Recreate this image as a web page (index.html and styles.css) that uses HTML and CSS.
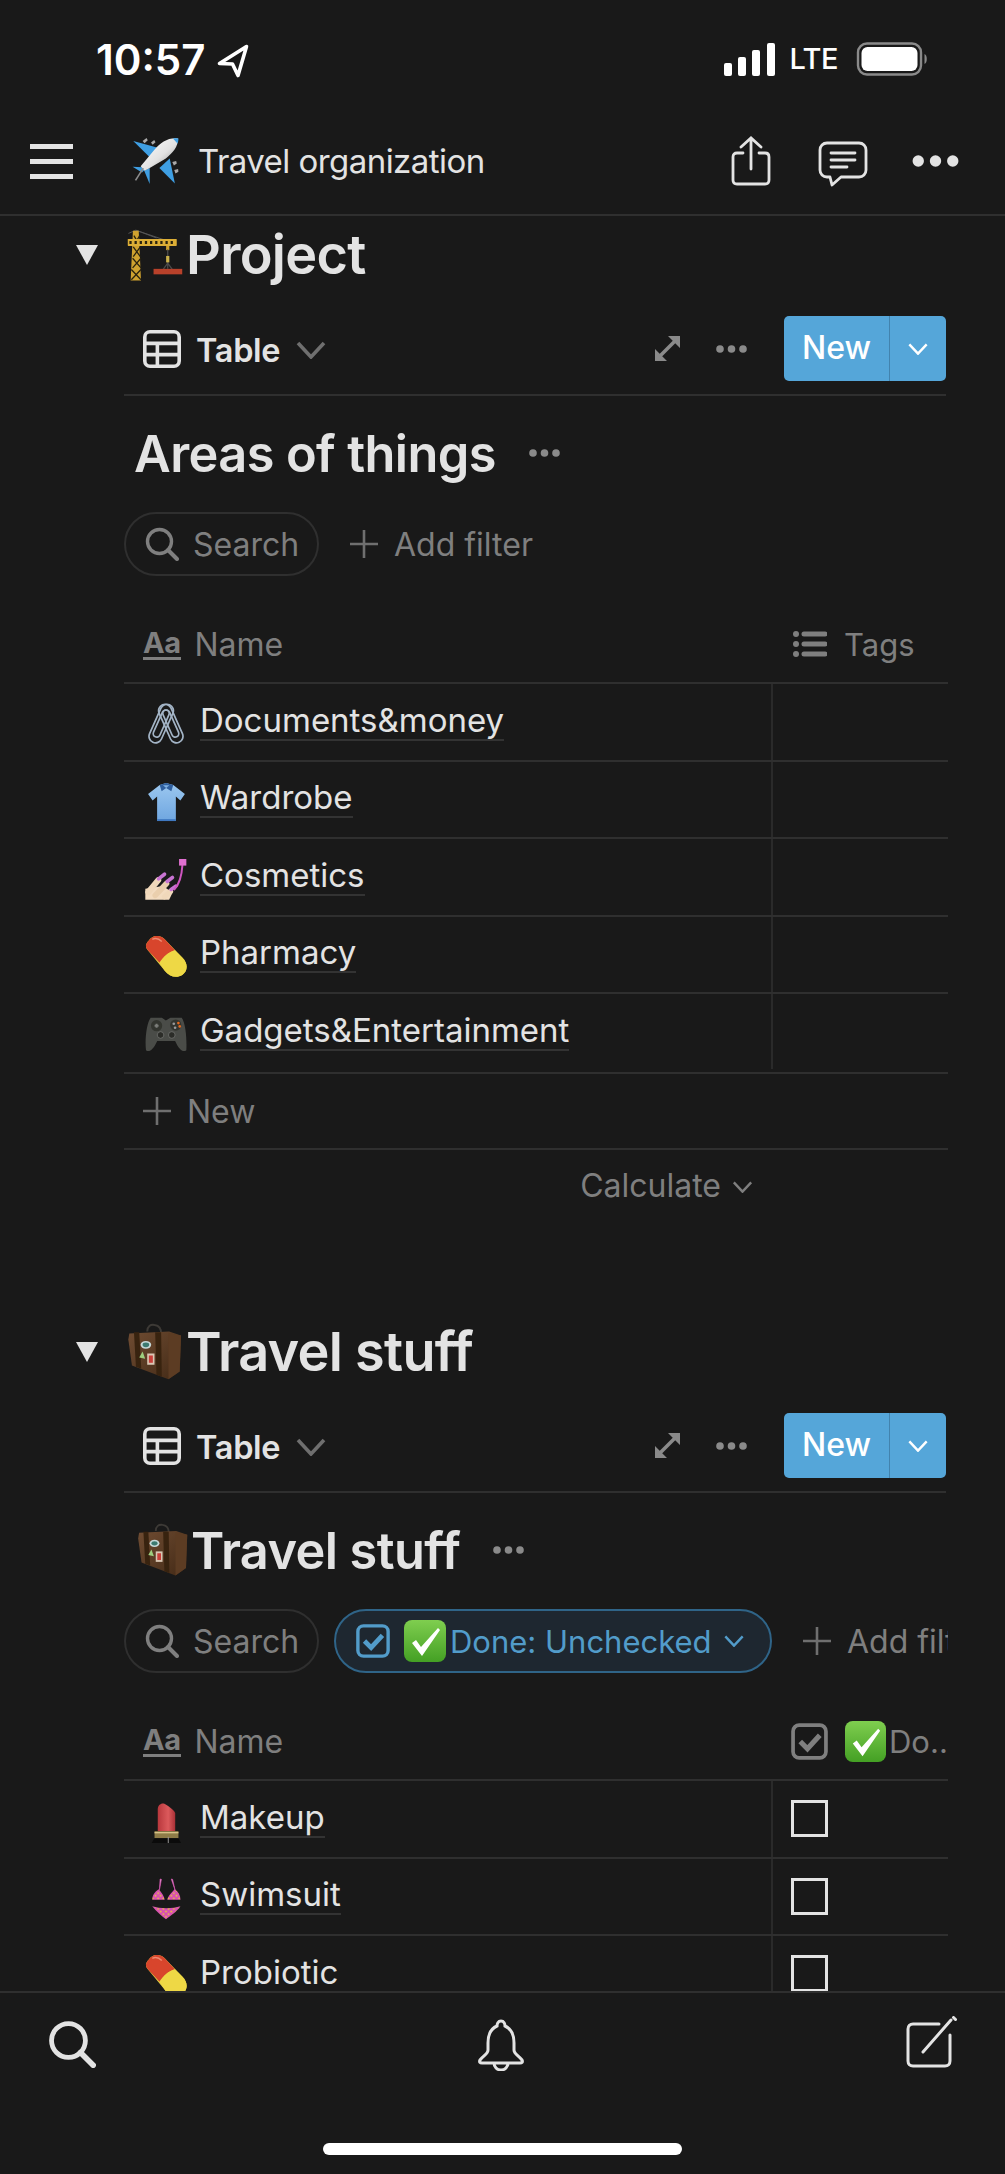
FILE: index.html
```html
<!DOCTYPE html>
<html lang="en">
<head>
<meta charset="utf-8">
<title>Travel organization</title>
<link rel="stylesheet" href="styles.css">
</head>
<body>
<svg class="defs" aria-hidden="true">
  <defs>
    <linearGradient id="gBody" x1="0" y1="0" x2="1" y2="1"><stop offset="0" stop-color="#ffffff"/><stop offset=".55" stop-color="#e2e2e2"/><stop offset="1" stop-color="#858585"/></linearGradient>
    <linearGradient id="gGreen" x1="0" y1="0" x2="0" y2="1"><stop offset="0" stop-color="#7fce4f"/><stop offset="1" stop-color="#44a024"/></linearGradient>
    <linearGradient id="gCase" x1="0" y1="0" x2="1" y2="1"><stop offset="0" stop-color="#6f4c32"/><stop offset="1" stop-color="#432a16"/></linearGradient>
    <linearGradient id="gShirt" x1="0" y1="0" x2="0" y2="1"><stop offset="0" stop-color="#9cc8f0"/><stop offset="1" stop-color="#6fa6e0"/></linearGradient>
    <linearGradient id="gRed" x1="0" y1="0" x2="1" y2="0"><stop offset="0" stop-color="#b8373c"/><stop offset=".6" stop-color="#dc5a5c"/><stop offset="1" stop-color="#a93036"/></linearGradient>
    <pattern id="pDots" width="16" height="16" patternUnits="userSpaceOnUse"><rect width="16" height="16" fill="#d94fb4"/><circle cx="4" cy="4" r="3" fill="#e8c23c"/><circle cx="12" cy="12" r="3" fill="#e8c23c"/></pattern>
    <symbol id="i-plane" viewBox="30 20 155 160">
      <path d="M37 38 116 60 92 92Z" fill="#3f9fe3"/><path d="M166 170 150 92 118 122Z" fill="#3f9fe3"/>
      <path d="M35 118 80 120 64 136Z" fill="#3f9fe3"/><path d="M88 171 71 130 88 122Z" fill="#3f9fe3"/>
      <path d="M66 38 78 29 82 36 72 45ZM92 43 102 35 106 42 97 50ZM158 103 170 100 172 108 163 114ZM164 128 176 125 177 133 168 139Z" fill="#a9a9a9"/>
      <path d="M176 30C146 26 122 42 102 66L60 116 72 130 84 124 138 92C160 74 176 56 176 30Z" fill="url(#gBody)"/>
      <path d="M160 30C166 29 172 29 177 30 177 36 176 42 174 46Z" fill="#3f9fe3"/>
      <path d="M68 122 44 160" stroke="#8c8c8c" stroke-width="5" fill="none"/>
    </symbol>
    <symbol id="i-crane" viewBox="195 45 185 180">
      <path d="M205 68 228 58 292 82M228 58 322 90" stroke="#555" stroke-width="3" fill="none"/>
      <path d="M219 60H237L244 214H212Z" fill="#cfa22f"/>
      <path d="M222 75 240 105M240 75 222 105M220 110 242 140M242 110 220 140M218 145 244 175M244 145 218 175M214 180 244 212M244 180 214 212" stroke="#2a230f" stroke-width="4"/>
      <rect x="203" y="85" width="152" height="22" rx="2" fill="#dcae36"/>
      <path d="M208 96H352" stroke="#2a230f" stroke-width="9" stroke-dasharray="7 9" fill="none"/>
      <path d="M322 107H332V120H322Z" fill="#cfa22f"/>
      <path d="M327 118V178M304 192 327 160 350 192" stroke="#4b4b4b" stroke-width="4" fill="none"/>
      <rect x="322" y="138" width="10" height="20" fill="#c9b04a"/>
      <rect x="283" y="178" width="89" height="17" fill="#b8412a"/>
    </symbol>
    <symbol id="i-case" viewBox="20 20 175 175">
      <path d="M84 46C84 30 94 24 106 26 120 28 127 38 126 54" fill="none" stroke="#3d3a36" stroke-width="6"/>
      <path d="M30 52 150 46 186 58 182 166 148 190 38 148 27 70Z" fill="url(#gCase)"/>
      <path d="M148 50 186 58 182 166 148 190Z" fill="#5c3c23"/>
      <path d="M44 48H60L66 158 50 152ZM108 48H126L128 182 112 176Z" fill="#38230f"/>
      <ellipse cx="80" cy="86" rx="16" ry="12" fill="#c6d8d8"/><ellipse cx="80" cy="86" rx="10" ry="7" fill="#3c7a70"/>
      <path d="M60 124 70 106 78 128Z" fill="#9fcf7f"/>
      <rect x="84" y="112" width="22" height="34" fill="#d9c7b4"/><rect x="89" y="118" width="12" height="22" fill="#c9403a"/>
    </symbol>
    <symbol id="i-clips" viewBox="0 0 42 42">
      <g fill="none" stroke="#a3b4c6" stroke-width="1.700">
        <g transform="rotate(24 16 21)"><rect x="9.500" y="0" width="13" height="41" rx="6.500"/><rect x="12.500" y="6" width="7" height="29" rx="3.500"/></g>
        <g transform="rotate(-24 26 21)"><rect x="19.500" y="0" width="13" height="41" rx="6.500"/><rect x="22.500" y="6" width="7" height="29" rx="3.500"/></g>
      </g>
    </symbol>
    <symbol id="i-shirt" viewBox="45 300 125 130">
      <path d="M88 312 108 306 130 312 166 340 152 360 138 348 138 424H80L80 348 66 360 52 340Z" fill="url(#gShirt)"/>
      <path d="M88 312 108 306 130 312 124 332 108 322 94 332Z" fill="#2f5f9f"/><path d="M98 313H118L108 322Z" fill="#7fb0e2"/>
      <path d="M80 424H138V418H80Z" fill="#3f78c0"/>
    </symbol>
    <symbol id="i-nail" viewBox="45 535 127 127">
      <path d="M46 628 46 661H118L128 640 100 620Z" fill="#f3dcc0"/>
      <g fill="none" stroke-linecap="round">
        <path d="M55 638 85 602" stroke="#f0d8ba" stroke-width="18"/>
        <path d="M76 648 110 612" stroke="#eacfad" stroke-width="17"/>
        <path d="M104 652 122 636" stroke="#f0d8ba" stroke-width="16"/>
        <path d="M86 598 104 584" stroke="#c873d2" stroke-width="11"/>
        <path d="M112 606 128 594" stroke="#c873d2" stroke-width="11"/>
        <path d="M124 630 138 620" stroke="#c873d2" stroke-width="11"/>
        <path d="M158 558C156 590 150 612 134 630" stroke="#cf55c0" stroke-width="6"/>
      </g>
      <rect x="148" y="538" width="22" height="20" fill="#e06fd0"/>
    </symbol>
    <symbol id="i-pill" viewBox="50 775 115 115">
      <path d="M60 788C72 770 92 772 104 784L152 834C170 852 166 872 152 882 136 892 116 886 104 870L56 812C50 804 52 796 60 788Z" fill="#e0d040"/>
      <path d="M60 788C72 770 92 772 104 784L132 814C116 818 100 832 90 848L56 812C50 804 52 796 60 788Z" fill="#d8452c"/>
      <path d="M132 814C116 818 100 832 90 848L104 870C116 886 136 892 152 882 166 872 170 852 152 834Z" fill="#eed845"/>
      <path d="M70 784C78 780 88 782 96 790" stroke="#ef8a70" stroke-width="4" fill="none"/>
    </symbol>
    <symbol id="i-pad" viewBox="45 1018 127 110">
      <path d="M62 1024H96L108 1032 122 1024H156C168 1040 172 1090 170 1122 160 1130 148 1120 136 1094H82C70 1120 58 1130 48 1122 44 1090 50 1040 62 1024Z" fill="#4a4c48"/>
      <circle cx="80" cy="1048" r="17" fill="#33352f"/><path d="M74 1048H86M80 1042V1054" stroke="#7b7d79" stroke-width="6"/>
      <circle cx="138" cy="1046" r="17" fill="#33352f"/><circle cx="132" cy="1042" r="4" fill="#9a9a9a"/><circle cx="146" cy="1040" r="4" fill="#e4681f"/><circle cx="150" cy="1050" r="4" fill="#e4681f"/><circle cx="136" cy="1054" r="4" fill="#9a9a9a"/>
      <circle cx="92" cy="1076" r="10" fill="#2b2c28" stroke="#7b7d79" stroke-width="2"/><circle cx="126" cy="1076" r="10" fill="#2b2c28" stroke="#7b7d79" stroke-width="2"/>
    </symbol>
    <symbol id="i-lip" viewBox="60 30 95 130">
      <path d="M82 120V52C82 42 90 34 100 35 104 36 130 52 136 64V120Z" fill="url(#gRed)"/>
      <path d="M72 120H146V142H72Z" fill="#8e7c48"/><path d="M72 125H146" stroke="#d9c68c" stroke-width="4"/>
      <path d="M72 142H146L154 157H63Z" fill="#0b0b0b"/><rect x="113" y="138" width="3" height="19" fill="#999"/>
    </symbol>
    <symbol id="i-bikini" viewBox="62 262 92 128">
      <path d="M90 265 94 266 88 298ZM124 265 128 266 136 300Z" fill="#d9a9c9" stroke="#d94fb4" stroke-width="2"/>
      <path d="M86 296C94 306 102 316 104 328H66C66 314 74 304 86 296Z" fill="url(#pDots)"/>
      <path d="M134 296C126 306 114 316 112 328H152C152 314 146 304 134 296Z" fill="url(#pDots)"/>
      <path d="M66 348C90 356 128 356 152 348 140 366 120 378 108 388 96 378 78 364 66 348Z" fill="url(#pDots)"/>
    </symbol>
    <symbol id="i-check" viewBox="0 0 42 42">
      <rect width="42" height="42" rx="8" fill="url(#gGreen)"/>
      <path d="M8 23 12 20 17 27 34 8 36 10 18 36Z" fill="#fff"/>
    </symbol>
    <symbol id="i-table" viewBox="0 0 37 37">
      <rect x="1.750" y="1.750" width="33.500" height="33.500" rx="5" fill="none" stroke="currentColor" stroke-width="3.500"/>
      <path d="M2 13H35M2 24H35M14 13V35" fill="none" stroke="currentColor" stroke-width="3.500"/>
    </symbol>
    <symbol id="i-chev" viewBox="0 0 30 18"><path d="M2 2 15 16 28 2" fill="none" stroke="currentColor" stroke-width="3.600"/></symbol>
    <symbol id="i-expand" viewBox="0 0 25 25"><path d="M13 0H25V12ZM0 13V25H12Z" fill="currentColor"/><path d="M5 20 20 5" stroke="currentColor" stroke-width="3.600"/></symbol>
    <symbol id="i-dots" viewBox="0 0 31 8"><circle cx="4" cy="4" r="3.800" fill="currentColor"/><circle cx="15.500" cy="4" r="3.800" fill="currentColor"/><circle cx="27" cy="4" r="3.800" fill="currentColor"/></symbol>
    <symbol id="i-search" viewBox="0 0 34 34"><circle cx="14.500" cy="14.500" r="12" fill="none" stroke="currentColor" stroke-width="3.400"/><path d="M23 23 32 32" stroke="currentColor" stroke-width="4" stroke-linecap="round"/></symbol>
    <symbol id="i-plus" viewBox="0 0 28 28"><path d="M14 0V28M0 14H28" stroke="currentColor" stroke-width="2.600"/></symbol>
    <symbol id="i-list" viewBox="0 0 34 26"><circle cx="3" cy="3" r="3" fill="currentColor"/><circle cx="3" cy="13" r="3" fill="currentColor"/><circle cx="3" cy="23" r="3" fill="currentColor"/><path d="M11 3H32M11 13H32M11 23H32" stroke="currentColor" stroke-width="5" stroke-linecap="round"/></symbol>
    <symbol id="i-box" viewBox="0 0 36 36"><rect x="2" y="2" width="32" height="32" rx="6" fill="none" stroke="currentColor" stroke-width="3.600"/><path d="M9 18 16 25 28 12" fill="none" stroke="currentColor" stroke-width="5"/></symbol>
  </defs>
</svg>
<div class="app">
  <header class="status">
    <span class="time">10:57</span>
    <svg class="loc" viewBox="0 0 32 34"><path d="M29.500 2.500 2.500 19.500 15.500 20 21 31.500Z" fill="none" stroke="#fff" stroke-width="3.600" stroke-linejoin="round"/></svg>
    <div class="status-right">
      <svg class="signal" viewBox="0 0 51 33"><rect x="0" y="20" width="8" height="13" rx="2" fill="#fff"/><rect x="14" y="14" width="8" height="19" rx="2" fill="#fff"/><rect x="28" y="7" width="8" height="26" rx="2" fill="#fff"/><rect x="43" y="0" width="8" height="33" rx="2" fill="#fff"/></svg>
      <span class="lte">LTE</span>
      <svg class="battery" viewBox="0 0 72 34"><rect x="1.500" y="1.500" width="63" height="31" rx="9" fill="none" stroke="#8a8a8a" stroke-width="2.400"/><rect x="5" y="5" width="56" height="24" rx="6" fill="#fff"/><path d="M68 12C71 13 71 21 68 22Z" fill="#8a8a8a"/></svg>
    </div>
  </header>

  <nav class="nav">
    <div class="burger"><span></span><span></span><span></span></div>
    <svg class="nav-emoji"><use href="#i-plane"/></svg>
    <span class="nav-title">Travel organization</span>
    <div class="nav-actions">
      <svg class="share" viewBox="0 0 40 50"><path d="M12 17H6C3.500 17 2 18.500 2 21V44C2 46.500 3.500 48 6 48H34C36.500 48 38 46.500 38 44V21C38 18.500 36.500 17 34 17H28M20 33V3M10 11 20 2 30 11" fill="none" stroke="#e3e3e3" stroke-width="2.800" stroke-linecap="round"/></svg>
      <svg class="comment" viewBox="0 0 50 46"><path d="M9 2H41C45 2 48 5 48 9V29C48 33 45 36 41 36H23L14 44 12 36H9C5 36 2 33 2 29V9C2 5 5 2 9 2Z" fill="none" stroke="#e3e3e3" stroke-width="2.800" stroke-linejoin="round"/><path d="M13 12H37M13 19H37M13 26H29" stroke="#e3e3e3" stroke-width="2.800" stroke-linecap="round"/></svg>
      <svg class="nav-dots"><use href="#i-dots"/></svg>
    </div>
  </nav>

  <main class="content">
    <section class="section">
      <h2 class="heading"><span class="tri"></span><svg class="h-emoji"><use href="#i-crane"/></svg><span>Project</span></h2>
      <div class="toolbar">
        <svg class="tb-table"><use href="#i-table"/></svg>
        <span class="tb-label">Table</span>
        <svg class="tb-chev"><use href="#i-chev"/></svg>
        <svg class="tb-expand"><use href="#i-expand"/></svg>
        <svg class="tb-dots"><use href="#i-dots"/></svg>
        <div class="btn"><span class="btn-new">New</span><span class="btn-drop"><svg class="btn-chev"><use href="#i-chev"/></svg></span></div>
      </div>
      <div class="title-row"><h3 class="title">Areas of things</h3><svg class="title-dots"><use href="#i-dots"/></svg></div>
      <div class="filters">
        <div class="pill"><svg class="pill-search"><use href="#i-search"/></svg><span>Search</span></div>
        <div class="add"><svg class="add-plus"><use href="#i-plus"/></svg><span>Add filter</span></div>
      </div>
      <div class="thead">
        <div class="th-name"><span class="aa">Aa</span><span>Name</span></div>
        <div class="th-col"><svg class="th-list"><use href="#i-list"/></svg><span>Tags</span></div>
      </div>
      <div class="row"><div class="cell-name"><svg class="r-emoji"><use href="#i-clips"/></svg><span class="link">Documents&amp;money</span></div><div class="cell"></div></div>
      <div class="row"><div class="cell-name"><svg class="r-emoji"><use href="#i-shirt"/></svg><span class="link">Wardrobe</span></div><div class="cell"></div></div>
      <div class="row"><div class="cell-name"><svg class="r-emoji"><use href="#i-nail"/></svg><span class="link">Cosmetics</span></div><div class="cell"></div></div>
      <div class="row"><div class="cell-name"><svg class="r-emoji"><use href="#i-pill"/></svg><span class="link">Pharmacy</span></div><div class="cell"></div></div>
      <div class="row row-last"><div class="cell-name"><svg class="r-emoji"><use href="#i-pad"/></svg><span class="link">Gadgets&amp;Entertainment</span></div><div class="cell"></div></div>
      <div class="new-row"><svg class="add-plus"><use href="#i-plus"/></svg><span>New</span></div>
      <div class="calc"><span>Calculate</span><svg class="calc-chev"><use href="#i-chev"/></svg></div>
    </section>

    <section class="section section-2">
      <h2 class="heading"><span class="tri"></span><svg class="h-emoji"><use href="#i-case"/></svg><span>Travel stuff</span></h2>
      <div class="toolbar">
        <svg class="tb-table"><use href="#i-table"/></svg>
        <span class="tb-label">Table</span>
        <svg class="tb-chev"><use href="#i-chev"/></svg>
        <svg class="tb-expand"><use href="#i-expand"/></svg>
        <svg class="tb-dots"><use href="#i-dots"/></svg>
        <div class="btn"><span class="btn-new">New</span><span class="btn-drop"><svg class="btn-chev"><use href="#i-chev"/></svg></span></div>
      </div>
      <div class="title-row title-row-2"><svg class="title-emoji"><use href="#i-case"/></svg><h3 class="title">Travel stuff</h3><svg class="title-dots"><use href="#i-dots"/></svg></div>
      <div class="filters">
        <div class="pill"><svg class="pill-search"><use href="#i-search"/></svg><span>Search</span></div>
        <div class="pill-on">
          <svg class="on-box"><use href="#i-box"/></svg>
          <svg class="on-check"><use href="#i-check"/></svg>
          <span>Done: Unchecked</span>
          <svg class="on-chev"><use href="#i-chev"/></svg>
        </div>
        <div class="add add-2"><svg class="add-plus"><use href="#i-plus"/></svg><span>Add filter</span></div>
      </div>
      <div class="thead">
        <div class="th-name"><span class="aa">Aa</span><span>Name</span></div>
        <div class="th-col th-done"><svg class="th-box"><use href="#i-box"/></svg><svg class="th-check"><use href="#i-check"/></svg><span>Do..</span></div>
      </div>
      <div class="row"><div class="cell-name"><svg class="r-emoji r-emoji-low"><use href="#i-lip"/></svg><span class="link">Makeup</span></div><div class="cell"><span class="cb"></span></div></div>
      <div class="row"><div class="cell-name"><svg class="r-emoji"><use href="#i-bikini"/></svg><span class="link">Swimsuit</span></div><div class="cell"><span class="cb"></span></div></div>
      <div class="row"><div class="cell-name"><svg class="r-emoji"><use href="#i-pill"/></svg><span class="link">Probiotic</span></div><div class="cell"><span class="cb"></span></div></div>
    </section>
  </main>

  <footer class="bottom">
    <div class="bottom-icons">
      <svg class="b-search"><use href="#i-search"/></svg>
      <svg class="b-bell" viewBox="0 0 48 52"><path d="M24 2C27 2 28 5 28 7 35 10 37 16 37 24V31C37 35 42 37 45 41 46 43 45 44 43 44H5C3 44 2 43 3 41 6 37 11 35 11 31V24C11 16 13 10 20 7 20 5 21 2 24 2ZM17 44C17 48 20 51 24 51 28 51 31 48 31 44" fill="none" stroke="#e3e3e3" stroke-width="3"/></svg>
      <svg class="b-compose" viewBox="0 0 51 52"><path d="M33 8H7C4 8 2 10 2 13V45C2 48 4 50 7 50H39C42 50 44 48 44 45V19" fill="none" stroke="#e3e3e3" stroke-width="3" stroke-linecap="round"/><path d="M17 36 45 4" stroke="#e3e3e3" stroke-width="3" stroke-linecap="round"/><path d="M47.500 1.500 49.500 3.500" stroke="#e3e3e3" stroke-width="3" stroke-linecap="round"/></svg>
    </div>
    <div class="home"></div>
  </footer>
</div>
</body>
</html>
```
FILE: styles.css
```css
* { box-sizing: border-box; }
html, body { margin: 0; padding: 0; background: #191919; }
body { font-family: Inter, "Liberation Sans", sans-serif; color: #e3e3e3; }
svg { display: block; flex: none; }
.defs { position: absolute; width: 0; height: 0; }

.app { width: 1005px; height: 2174px; display: flex; flex-direction: column; overflow: hidden; background: #191919; }

/* status bar */
.status { height: 120px; flex: none; display: flex; align-items: flex-start; padding: 40px 76px 0 96px; color: #fff; }
.time { font-size: 42px; font-weight: 600; line-height: 40px; }
.loc { width: 32px; height: 34px; margin: 4px 0 0 12px; }
.status-right { margin-left: auto; display: flex; align-items: center; }
.signal { width: 51px; height: 33px; margin-top: 2px; }
.lte { font-size: 29px; font-weight: 500; line-height: 34px; margin: 2px 0 0 14px; letter-spacing: -0.5px; }
.battery { width: 73px; height: 34px; margin: 2px 0 0 18px; }

/* nav */
.nav { height: 96px; flex: none; display: flex; align-items: center; padding: 0 46px 12px 30px; border-bottom: 2px solid #2f2f2f; }
.burger { width: 43px; height: 35px; display: flex; flex-direction: column; justify-content: space-between; }
.burger span { display: block; height: 5px; background: #e3e3e3; }
.nav-emoji { width: 50px; height: 52px; margin-left: 58px; }
.nav-title { font-size: 33px; margin-left: 17px; letter-spacing: -0.55px; }
.nav-actions { margin-left: auto; display: flex; align-items: center; }
.share { width: 40px; height: 50px; }
.comment { width: 50px; height: 46px; margin: 6px 0 0 47px; }
.nav-dots { width: 47px; height: 12px; margin-left: 44px; color: #e3e3e3; }

/* sections */
.content { flex: 1; min-height: 0; overflow: hidden; }
.section { margin-left: 124px; width: 824px; }
.section-2 { margin-top: 92px; }
.heading { margin: 0 0 0 -48px; height: 80px; padding-bottom: 3px; display: flex; align-items: center; font-size: 54px; font-weight: 600; letter-spacing: -0.7px; }
.tri { width: 0; height: 0; border-left: 11px solid transparent; border-right: 11px solid transparent; border-top: 20px solid #e3e3e3; margin-right: 27px; }
.h-emoji { width: 60px; height: 58px; margin-right: 1px; }

.toolbar { width: 822px; height: 100px; padding: 20px 0 13px 19px; display: flex; align-items: center; border-bottom: 2px solid #2f2f2f; }
.tb-table { width: 38px; height: 38px; color: #e3e3e3; }
.tb-label { font-size: 32.5px; font-weight: 600; margin: 3px 0 0 15px; letter-spacing: -0.3px; }
.tb-chev { width: 30px; height: 18px; margin: 3px 0 0 16px; color: #6f6f6f; }
.tb-expand { width: 25px; height: 25px; margin-left: auto; color: #8a8a8a; }
.tb-dots { width: 31px; height: 8px; margin-left: 36px; color: #8a8a8a; }
.btn { width: 162px; height: 65px; margin-left: 37px; display: flex; border-radius: 5px; overflow: hidden; background: #55a6d9; color: #fff; }
.btn-new { width: 106px; font-size: 32px; font-weight: 500; line-height: 63px; text-align: center; border-right: 1px solid #4283ae; }
.btn-drop { flex: 1; display: flex; align-items: center; justify-content: center; }
.btn-chev { width: 20px; height: 12px; }

.title-row { height: 116px; padding: 0 0 2px 10px; display: flex; align-items: center; }
.title { margin: 0; font-size: 50.5px; font-weight: 600; letter-spacing: -0.6px; }
.title-dots { width: 33px; height: 8px; margin-left: 32px; color: #8a8a8a; }
.title-row-2 { padding-left: 12px; }
.title-emoji { width: 54px; height: 54px; margin-right: 1px; }

.filters { height: 64px; display: flex; align-items: center; overflow: hidden; white-space: nowrap; font-size: 32px; color: #7f7f7f; }
.pill { width: 195px; height: 64px; flex: none; border: 2px solid #2f2f2f; border-radius: 32px; display: flex; align-items: center; padding-left: 19px; }
.pill-search { width: 34px; height: 34px; margin-right: 14px; color: #7f7f7f; }
.add { display: flex; align-items: center; margin-left: 31px; flex: none; }
.add-plus { width: 28px; height: 28px; margin-right: 16px; color: #6f6f6f; }
.add-2 { margin-left: 31px; }
.pill-on { width: 438px; height: 64px; flex: none; margin-left: 15px; border: 2px solid #2f6488; border-radius: 32px; background: #1e2730; color: #529cca; display: flex; align-items: center; padding-left: 20px; font-size: 31px; }
.on-box { width: 34px; height: 34px; color: #529cca; }
.on-check { width: 42px; height: 42px; margin: 0 4px 0 14px; }
.on-chev { width: 20px; height: 12px; margin-left: 12px; color: #529cca; }

.thead { height: 108px; padding-top: 30px; display: grid; grid-template-columns: 647px 1fr; align-items: center; border-bottom: 2px solid #2f2f2f; font-size: 32px; color: #7f7f7f; }
.th-name { display: flex; align-items: center; padding-left: 19px; }
.aa { font-size: 29px; font-weight: 700; line-height: 28px; color: #7f7f7f; border-bottom: 3px solid #7f7f7f; margin-right: 14px; letter-spacing: -0.5px; }
.th-col { display: flex; align-items: center; padding-left: 22px; font-size: 31px; }
.th-list { width: 34px; height: 26px; margin-right: 17px; color: #7f7f7f; }
.th-done { padding-left: 20px; }
.th-box { width: 37px; height: 37px; color: #7f7f7f; }
.th-check { width: 41px; height: 41px; margin: 0 3px 0 17px; }

.row { height: 77.5px; display: grid; grid-template-columns: 647px 1fr; border-bottom: 2px solid #2f2f2f; }
.row-last { height: 80px; padding-bottom: 3px; }
.cell-name { display: flex; align-items: center; padding-left: 21px; }
.cell { border-left: 2px solid #2a2a2a; display: flex; align-items: center; padding-left: 18px; }
.r-emoji { width: 42px; height: 42px; margin: 5px 13px 0 0; }
.r-emoji-low { margin-top: 8px; }
.link { font-size: 33px; line-height: 38px; border-bottom: 2px solid #333; margin-top: -2px; }
.cb { display: block; width: 37px; height: 37px; border: 3.5px solid #e3e3e3; }

.new-row { height: 76px; display: flex; align-items: center; padding-left: 19px; border-bottom: 2px solid #2f2f2f; font-size: 32px; color: #7f7f7f; }
.calc { height: 71px; display: flex; align-items: center; justify-content: flex-end; padding-right: 195px; font-size: 32px; color: #7f7f7f; }
.calc-chev { width: 21px; height: 12px; margin: 3px 0 0 11px; color: #7f7f7f; }

/* bottom bar */
.bottom { height: 183px; flex: none; border-top: 2px solid #2f2f2f; display: flex; flex-direction: column; background: #191919; }
.bottom-icons { display: flex; justify-content: space-between; align-items: flex-start; padding: 23px 48px 0 48px; }
.b-search { width: 48px; height: 48px; margin-top: 4px; color: #e3e3e3; }
.b-bell { width: 48px; height: 52px; margin-top: 3px; }
.b-compose { width: 51px; height: 52px; }
.home { width: 359px; height: 12px; margin: auto auto 19px; background: #fff; border-radius: 6px; }
```
